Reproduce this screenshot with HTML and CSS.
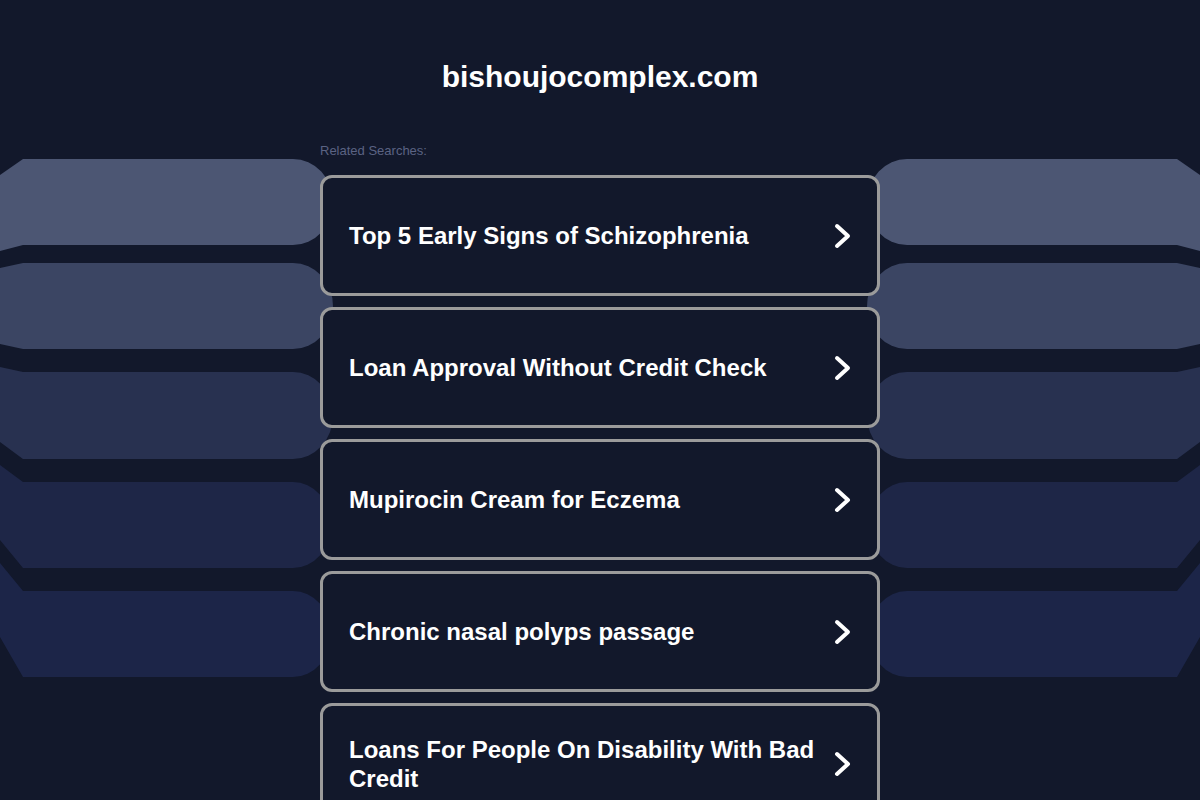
FILE: index.html
```html
<!DOCTYPE html>
<html lang="en">
<head>
<meta charset="utf-8">
<title>bishoujocomplex.com</title>
<link rel="stylesheet" href="styles.css">
</head>
<body>
<div class="page">
  <svg class="deco deco-left" width="340" height="800" viewBox="0 0 340 800" aria-hidden="true">
    <path fill="#4c5673" d="M0 175 L23 159 L293 159 A40 43 0 0 1 293 245 L23 245 L0 251 Z"/>
    <path fill="#3b4563" d="M0 268 L23 263 L293 263 A40 43 0 0 1 293 349 L23 349 L0 344 Z"/>
    <path fill="#283150" d="M0 367 L23 372 L293 372 A40 43.5 0 0 1 293 459 L23 459 L0 442 Z"/>
    <path fill="#1e2647" d="M0 465 L23 482 L293 482 A38 43 0 0 1 293 568 L23 568 L0 540 Z"/>
    <path fill="#1c2548" d="M0 563 L23 591 L293 591 A38 43 0 0 1 293 677 L23 677 L0 637 Z"/>
  </svg>
  <svg class="deco deco-right" width="340" height="800" viewBox="0 0 340 800" aria-hidden="true">
    <path fill="#4c5673" d="M0 175 L23 159 L293 159 A40 43 0 0 1 293 245 L23 245 L0 251 Z"/>
    <path fill="#3b4563" d="M0 268 L23 263 L293 263 A40 43 0 0 1 293 349 L23 349 L0 344 Z"/>
    <path fill="#283150" d="M0 367 L23 372 L293 372 A40 43.5 0 0 1 293 459 L23 459 L0 442 Z"/>
    <path fill="#1e2647" d="M0 465 L23 482 L293 482 A38 43 0 0 1 293 568 L23 568 L0 540 Z"/>
    <path fill="#1c2548" d="M0 563 L23 591 L293 591 A38 43 0 0 1 293 677 L23 677 L0 637 Z"/>
  </svg>

  <header class="header">
    <h1 class="domain">bishoujocomplex.com</h1>
  </header>

  <main class="related">
    <div class="related-label">Related Searches:</div>
    <ul class="links">
      <li><a class="link-card" href="#"><span class="link-text">Top 5 Early Signs of Schizophrenia</span><svg class="chev" width="20" height="28" viewBox="0 0 20 28"><polyline points="4,4 15,14 4,24" /></svg></a></li>
      <li><a class="link-card" href="#"><span class="link-text">Loan Approval Without Credit Check</span><svg class="chev" width="20" height="28" viewBox="0 0 20 28"><polyline points="4,4 15,14 4,24" /></svg></a></li>
      <li><a class="link-card" href="#"><span class="link-text">Mupirocin Cream for Eczema</span><svg class="chev" width="20" height="28" viewBox="0 0 20 28"><polyline points="4,4 15,14 4,24" /></svg></a></li>
      <li><a class="link-card" href="#"><span class="link-text">Chronic nasal polyps passage</span><svg class="chev" width="20" height="28" viewBox="0 0 20 28"><polyline points="4,4 15,14 4,24" /></svg></a></li>
      <li><a class="link-card" href="#"><span class="link-text">Loans For People On Disability With Bad Credit</span><svg class="chev" width="20" height="28" viewBox="0 0 20 28"><polyline points="4,4 15,14 4,24" /></svg></a></li>
    </ul>
  </main>
</div>
</body>
</html>
```

FILE: styles.css
```css
* {
  box-sizing: border-box;
}

html, body {
  margin: 0;
  padding: 0;
  background: #12182b;
}

body {
  font-family: "Liberation Sans", Arial, sans-serif;
  color: #ffffff;
}

.page {
  position: relative;
  min-height: 800px;
  overflow: hidden;
}

.deco {
  position: absolute;
  top: 0;
  z-index: 0;
}

.deco-left {
  left: 0;
}

.deco-right {
  right: 0;
  transform: scaleX(-1);
}

.header {
  position: relative;
  z-index: 1;
  padding-top: 60px;
  text-align: center;
}

.domain {
  margin: 0;
  font-size: 30px;
  line-height: 34px;
  font-weight: 700;
  color: #ffffff;
}

.related {
  position: relative;
  z-index: 1;
  width: 560px;
  margin: 49px auto 0;
}

.related-label {
  font-size: 13px;
  line-height: 15px;
  color: #5b6383;
  margin-bottom: 17px;
}

.links {
  list-style: none;
  margin: 0;
  padding: 0;
  display: flex;
  flex-direction: column;
  gap: 11px;
}

.link-card {
  display: flex;
  align-items: center;
  min-height: 121px;
  padding: 28px 26px 28px 26px;
  border: 3px solid #9b9b9b;
  border-radius: 12px;
  background: #12182b;
  color: #ffffff;
  text-decoration: none;
}

.link-text {
  flex: 1;
  font-size: 24px;
  line-height: 29px;
  font-weight: 700;
}

.chev {
  flex: none;
  margin-left: 10px;
  margin-right: -2px;
}

.chev polyline {
  fill: none;
  stroke: #ffffff;
  stroke-width: 4;
  stroke-linecap: round;
  stroke-linejoin: round;
}
```
